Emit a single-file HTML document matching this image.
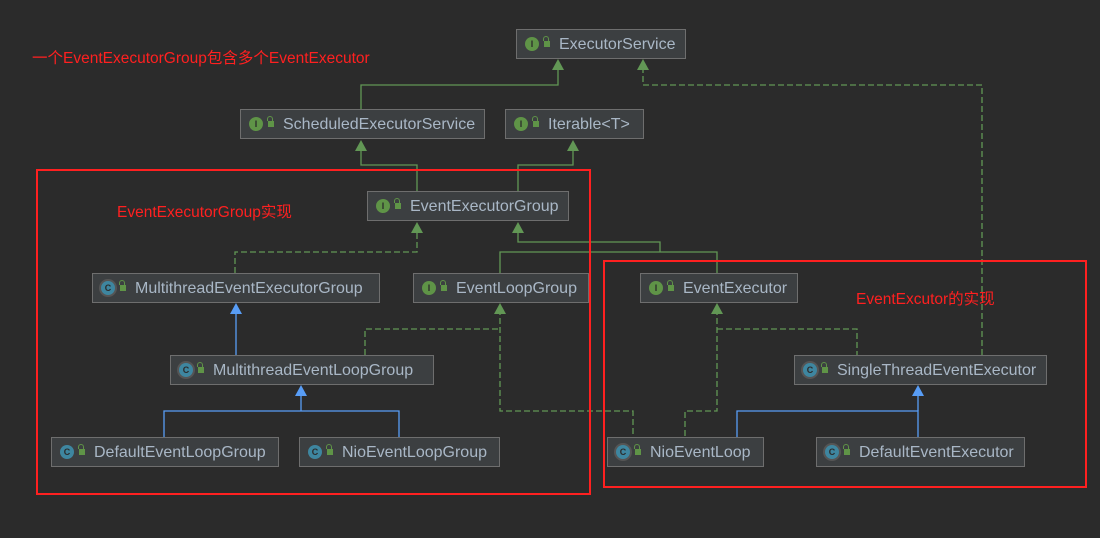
<!DOCTYPE html>
<html><head><meta charset="utf-8"><style>
body{margin:0;width:1100px;height:538px;background:#2b2b2b;overflow:hidden;position:relative;font-family:"Liberation Sans","Noto Sans CJK SC",sans-serif}
.b{position:absolute;height:28px;background:#3c3f41;border:1px solid #6e6e6e;color:#a9b7c6;font-size:16px;line-height:30px;white-space:nowrap;box-sizing:content-box}
.b i{position:absolute;left:8px;top:7px;width:14px;height:14px;border-radius:50%;font-style:normal;font-size:9px;line-height:14px;text-align:center;color:#2b2b2b;font-weight:bold}
.b i.I{background:#5f9447}
.b i.C{background:#3e86a0}
.b i.A{background:#3e86a0;box-shadow:0 0 0 2px #555}
.b u{position:absolute;left:27px;top:11px;width:6px;height:6px;background:#5f9447;text-decoration:none}
.b u:before{content:"";position:absolute;left:-1px;top:-5px;width:4px;height:4px;border:1px solid #5f9447;border-bottom:none;border-radius:3px 3px 0 0}
.b span{position:absolute;left:42px}
.r{position:absolute;color:#ff2020;font-size:15.5px}
</style></head><body>
<svg width="1100" height="538" style="position:absolute;left:0;top:0">
<g fill="none" stroke-width="1.3">
<g stroke="#629755">
<polyline points="361,109 361,85 558,85 558,66"/>
<polyline points="417,191 417,165 361,165 361,146"/>
<polyline points="518,191 518,165 573,165 573,146"/>
<polyline points="518,228 518,242 660,242 660,252"/>
<polyline points="500,273 500,252 717,252 717,273"/>
</g>
<g stroke="#629755" stroke-dasharray="6,3">
<polyline points="982,355 982,85 643,85 643,66"/>
<polyline points="235,273 235,252 417,252 417,228"/>
<polyline points="365,355 365,329 500,329"/>
<polyline points="500,309 500,411 633,411 633,437"/>
<polyline points="717,309 717,411 685,411 685,437"/>
<polyline points="717,329 857,329 857,355"/>
</g>
<g stroke="#589df6">
<polyline points="236,309 236,355"/>
<polyline points="301,391 301,411"/>
<polyline points="164,437 164,411 399,411 399,437"/>
<polyline points="918,391 918,411"/>
<polyline points="737,437 737,411 918,411 918,437"/>
</g>
<g stroke="#ff2020" stroke-width="2">
<rect x="37" y="170" width="553" height="324"/>
<rect x="604" y="261" width="482" height="226"/>
</g>
</g>
<g fill="#629755">
<path d="M558,59 l-6,11 h12z"/><path d="M643,59 l-6,11 h12z"/>
<path d="M361,140 l-6,11 h12z"/><path d="M573,140 l-6,11 h12z"/>
<path d="M417,222 l-6,11 h12z"/><path d="M518,222 l-6,11 h12z"/>
<path d="M500,303 l-6,11 h12z"/><path d="M717,303 l-6,11 h12z"/>
</g>
<g fill="#589df6">
<path d="M236,303 l-6,11 h12z"/><path d="M301,385 l-6,11 h12z"/><path d="M918,385 l-6,11 h12z"/>
</g>
</svg>
<div class="b" style="left:516px;top:29px;width:168px"><i class="I">I</i><u></u><span>ExecutorService</span></div>
<div class="b" style="left:240px;top:109px;width:243px"><i class="I">I</i><u></u><span>ScheduledExecutorService</span></div>
<div class="b" style="left:505px;top:109px;width:137px"><i class="I">I</i><u></u><span>Iterable&lt;T&gt;</span></div>
<div class="b" style="left:367px;top:191px;width:200px"><i class="I">I</i><u></u><span>EventExecutorGroup</span></div>
<div class="b" style="left:92px;top:273px;width:286px"><i class="A">C</i><u></u><span>MultithreadEventExecutorGroup</span></div>
<div class="b" style="left:413px;top:273px;width:174px"><i class="I">I</i><u></u><span>EventLoopGroup</span></div>
<div class="b" style="left:640px;top:273px;width:156px"><i class="I">I</i><u></u><span>EventExecutor</span></div>
<div class="b" style="left:170px;top:355px;width:262px"><i class="A">C</i><u></u><span>MultithreadEventLoopGroup</span></div>
<div class="b" style="left:794px;top:355px;width:251px"><i class="A">C</i><u></u><span>SingleThreadEventExecutor</span></div>
<div class="b" style="left:51px;top:437px;width:226px"><i class="C">C</i><u></u><span>DefaultEventLoopGroup</span></div>
<div class="b" style="left:299px;top:437px;width:199px"><i class="C">C</i><u></u><span>NioEventLoopGroup</span></div>
<div class="b" style="left:607px;top:437px;width:155px"><i class="A">C</i><u></u><span>NioEventLoop</span></div>
<div class="b" style="left:816px;top:437px;width:207px"><i class="A">C</i><u></u><span>DefaultEventExecutor</span></div>
<div class="r" style="left:32px;top:46px">一个EventExecutorGroup包含多个EventExecutor</div>
<div class="r" style="left:117px;top:200px">EventExecutorGroup实现</div>
<div class="r" style="left:856px;top:287px">EventExcutor的实现</div>
</body></html>
